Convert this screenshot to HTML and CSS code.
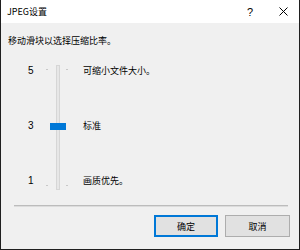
FILE: index.html
```html
<!DOCTYPE html>
<html lang="zh-CN">

<head>
    <meta charset="UTF-8">
    <title>JPEG设置</title>
    <link rel="stylesheet" href="styles.css">
</head>

<body>
    <div class="window">
        <div class="titlebar">
            <span class="title">JPEG设置</span>
            <span class="help">?</span>
            <span class="close">
                <svg width="9" height="9" viewBox="0 0 9 9">
                    <path d="M0.5 0.5 L8.5 8.5 M8.5 0.5 L0.5 8.5" stroke="#000" stroke-width="1" fill="none"/>
                </svg>
            </span>
        </div>
        <div class="content">
            <div class="desc">移动滑块以选择压缩比率。</div>
            <div class="slider">
                <div class="nums">
                    <span>5</span>
                    <span>3</span>
                    <span>1</span>
                </div>
                <div class="track-col">
                    <div class="track"></div>
                    <span class="tick tick-tl"></span>
                    <span class="tick tick-tr"></span>
                    <span class="tick tick-bl"></span>
                    <span class="tick tick-br"></span>
                    <div class="thumb"></div>
                </div>
                <div class="labels">
                    <span>可缩小文件大小。</span>
                    <span>标准</span>
                    <span>画质优先。</span>
                </div>
            </div>
            <div class="separator"></div>
            <div class="buttons">
                <button class="btn btn-default">确定</button>
                <button class="btn">取消</button>
            </div>
        </div>
    </div>
</body>

</html>
```

FILE: styles.css
```css
body {
    margin: 0;
    font-family: "Noto Sans CJK SC", "Noto Sans", sans-serif;
    font-size: 9px;
    color: #000;
    background-color: #f0f0f0;
}

.window {
    width: 300px;
    height: 250px;
    box-sizing: border-box;
    border: 1px solid #1f1f1f;
    border-top: none;
    display: flex;
    flex-direction: column;
    background-color: #f0f0f0;
}

.titlebar {
    height: 23px;
    background-color: #fff;
    display: flex;
    align-items: center;
    padding-left: 6px;
}

.title {
    flex: 1;
    line-height: 16px;
}

.help {
    width: 10px;
    text-align: center;
    font-family: "Liberation Sans", sans-serif;
    font-size: 11px;
    margin-right: 24px;
}

.close {
    display: flex;
    width: 9px;
    margin-right: 11px;
}

.content {
    flex: 1;
    display: flex;
    flex-direction: column;
}

.desc {
    margin: 10px 0 0 7px;
    line-height: 16px;
}

.slider {
    display: flex;
    height: 126px;
    margin-top: 14px;
}

.nums {
    width: 17px;
    margin-left: 27px;
    display: flex;
    flex-direction: column;
    justify-content: space-between;
    line-height: 16px;
    font-family: "Liberation Sans", sans-serif;
    font-size: 10px;
}

.track-col {
    position: relative;
    width: 25px;
}

.track {
    position: absolute;
    left: 11px;
    top: 2px;
    width: 2px;
    height: 123px;
    background-color: #e7e7e7;
    border: 1px solid #d6d6d6;
}

.tick {
    position: absolute;
    width: 2px;
    height: 1px;
    background-color: #c8c8c8;
}

.tick-tl { left: 1px; top: 6px; }
.tick-tr { left: 21px; top: 6px; }
.tick-bl { left: 1px; top: 122px; }
.tick-br { left: 21px; top: 122px; }

.thumb {
    position: absolute;
    left: 5px;
    top: 60px;
    width: 16px;
    height: 7px;
    background-color: #0078d7;
}

.labels {
    margin-left: 13px;
    display: flex;
    flex-direction: column;
    justify-content: space-between;
    line-height: 16px;
}

.separator {
    margin: 16px 11px 0 13px;
    height: 1px;
    background-color: #bcbcbc;
    border-bottom: 1px solid #dcdcdc;
}

.buttons {
    display: flex;
    justify-content: flex-end;
    gap: 7px;
    margin-top: 8px;
    padding-right: 9px;
}

.btn {
    width: 65px;
    height: 22px;
    padding: 0;
    font-family: "Noto Sans CJK SC", sans-serif;
    font-size: 9px;
    color: #000;
    background-color: #e1e1e1;
    border: 1px solid #adadad;
    border-radius: 0;
}

.btn-default {
    width: 64px;
    border: 2px solid #0078d7;
}
```
